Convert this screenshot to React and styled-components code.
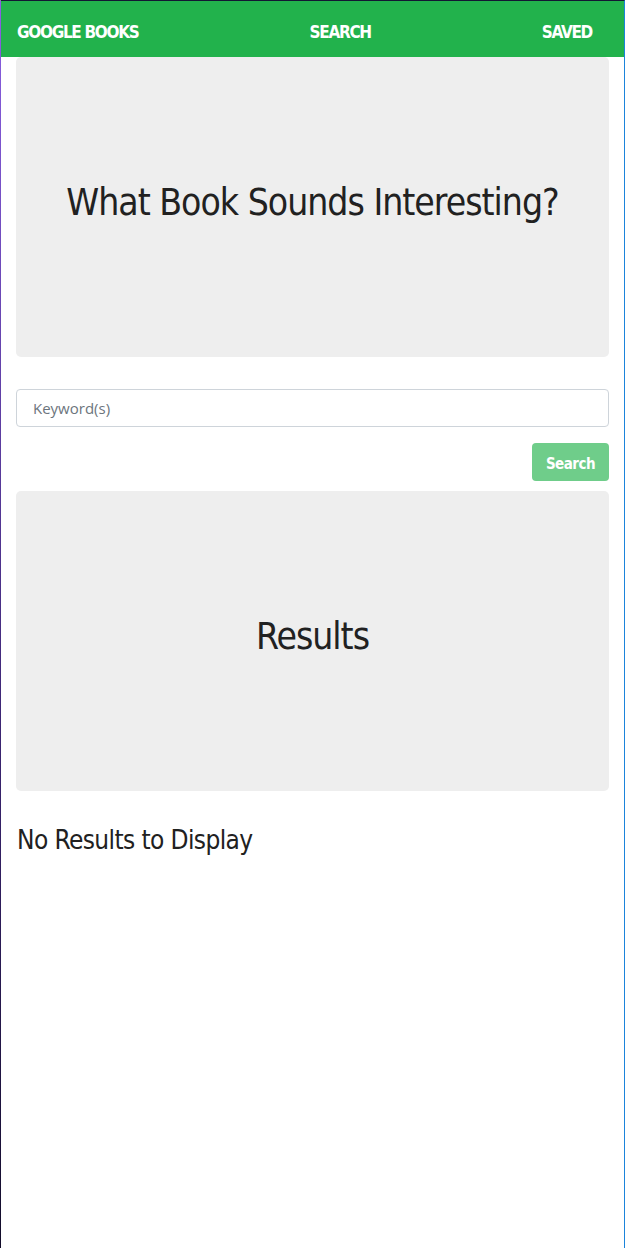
import React from 'react'
import styled, {createGlobalStyle} from 'styled-components'

const GlobalStyle = createGlobalStyle`
    *{
        box-sizing: border-box;
    }
    body{
        margin: 0;
        font-family: "Liberation Sans Narrow", "DejaVu Sans Condensed", sans-serif;
        color: #212529;
        background: #fff;
    }
`

const condensed = `"Liberation Sans Narrow", "DejaVu Sans Condensed", "Liberation Sans", sans-serif`

export default function App() {
    return (
        <Frame>
            <GlobalStyle/>
            <Nav>
                <NavLink>GOOGLE BOOKS</NavLink>
                <NavLink>SEARCH</NavLink>
                <NavLink>SAVED</NavLink>
            </Nav>
            <Container>
                <Jumbotron>
                    <Title>What Book Sounds Interesting?</Title>
                </Jumbotron>
                <SearchForm onSubmit={e => e.preventDefault()}>
                    <Input type="text" placeholder="Keyword(s)"/>
                    <ButtonRow>
                        <Button type="submit" disabled>Search</Button>
                    </ButtonRow>
                </SearchForm>
                <Jumbotron>
                    <Title>Results</Title>
                </Jumbotron>
                <Empty>No Results to Display</Empty>
            </Container>
        </Frame>
    )
}

const Frame = styled.div`
    width: 625px;
    min-height: 100vh;
    border-top: 1px solid #131633;
    border-right: 1px solid #1b84db;
    border-left: 1px solid transparent;
    background: linear-gradient(#fff, #fff) padding-box,
        linear-gradient(to bottom, #8b5fe3, #3a2470 60%, #120c2a) border-box;
`

const Nav = styled.nav`
    height: 56px;
    background: #22b24c;
    display: flex;
    align-items: center;
    justify-content: space-between;
    padding: 6px 32px 0 16px;
`

const NavLink = styled.a`
    font-family: ${condensed};
    font-weight: 700;
    font-size: 17px;
    letter-spacing: -1.3px;
    color: #fff;
    text-decoration: none;
    cursor: pointer;
`

const Container = styled.main`
    padding: 0 15px;
    display: flex;
    flex-direction: column;
`

const Jumbotron = styled.section`
    height: 300px;
    padding-bottom: 10px;
    background: #eeeeee;
    border-radius: 5px;
    display: flex;
    align-items: center;
    justify-content: center;
`

const Title = styled.h1`
    margin: 0;
    font-family: ${condensed};
    font-weight: 400;
    font-size: 37px;
    letter-spacing: -1px;
    color: #212121;
`

const SearchForm = styled.form`
    margin-top: 32px;
    display: flex;
    flex-direction: column;
    gap: 16px;
`

const Input = styled.input`
    height: 38px;
    width: 100%;
    padding: 6px 16px;
    border: 1px solid #ced4da;
    border-radius: 4px;
    font-family: "Open Sans", sans-serif;
    font-size: 15px;
    color: #495057;
    &::placeholder{
        color: #6c757d;
    }
`

const ButtonRow = styled.div`
    display: flex;
    justify-content: flex-end;
    margin-bottom: 10px;
`

const Button = styled.button`
    height: 38px;
    width: 77px;
    padding: 4px 0 0;
    border: none;
    border-radius: 4px;
    background: #6fcd8a;
    color: #fff;
    font-family: ${condensed};
    font-weight: 700;
    font-size: 15px;
    letter-spacing: -0.5px;
`

const Empty = styled.h2`
    margin: 34px 0 0 1px;
    font-family: ${condensed};
    font-weight: 400;
    font-size: 26px;
    letter-spacing: -0.6px;
    color: #212121;
`
